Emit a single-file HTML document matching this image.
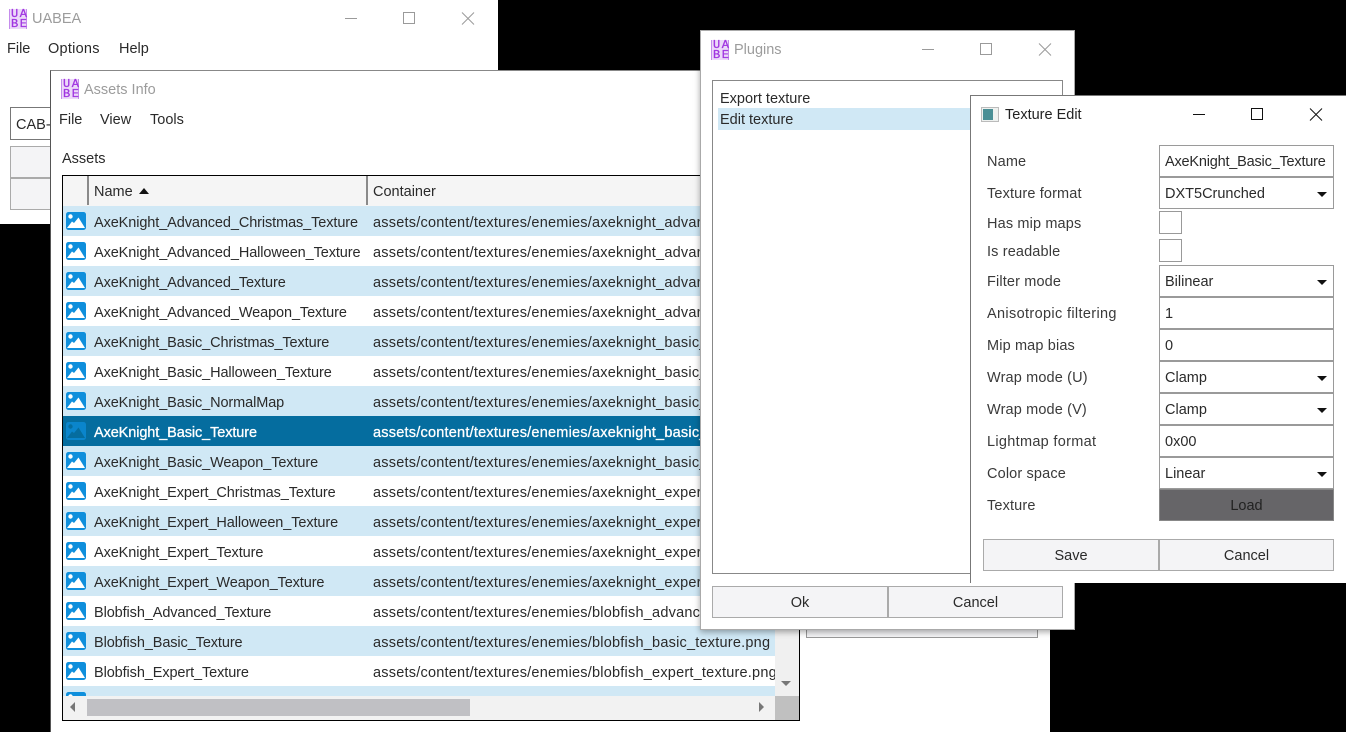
<!DOCTYPE html>
<html><head><meta charset="utf-8"><style>
html,body{margin:0;padding:0;width:1346px;height:732px;overflow:hidden;background:#000;font-family:"Liberation Sans",sans-serif;font-size:14.5px;color:#2a2a2a}
div,span{position:absolute;white-space:nowrap;box-sizing:border-box}
.win{background:#fff;overflow:hidden}
.t{line-height:20px;height:20px}
.logo{width:18px;height:20px;background:#ecd9f9;color:#a035e0;font:normal 12px/10px "Liberation Mono",monospace;text-align:center;letter-spacing:1.5px;padding-left:1px;border-left:1px solid #c58cec;border-right:1px solid #c58cec;-webkit-text-stroke:.3px #a035e0}
.title{color:#9c9c9c;font-size:14.5px;line-height:20px;height:20px}
.row{left:0;width:712px;height:30px}
.row span.n{left:31px;top:6px;line-height:22px;letter-spacing:-.1px}
.row span.c{left:310px;top:6px;line-height:22px;letter-spacing:.22px}
.a{background:#d0e8f5}
.sel{background:#056d9f;color:#fff}
.sel span{-webkit-text-stroke:.3px #fff}
.row svg{position:absolute;left:3px;top:6px}
.fld{left:188px;width:175px;height:32px;border:1px solid #9a9a9a;background:#fff;line-height:32px;padding-left:5px}
.btn{background:#f4f4f6;border:1px solid #aaa;text-align:center}
.arr{right:6px;top:14px;width:0;height:0;border-left:5px solid transparent;border-right:5px solid transparent;border-top:5px solid #111}
.lbl{left:16px;line-height:20px;height:20px;color:#3a3a3a;letter-spacing:.14px}
</style></head><body>
<svg width="0" height="0" style="position:absolute"><defs>
<symbol id="ic" viewBox="0 0 20 18"><rect width="20" height="18" rx="2.500" fill="#0f8fdc"/><circle cx="4.500" cy="4.500" r="2.200" fill="#fff"/><path d="M1 16 L6 9.500 L8 11 L12.500 5.500 L19 16Z" fill="#fff"/></symbol>
<symbol id="ics" viewBox="0 0 20 18"><rect width="20" height="18" rx="2.500" fill="#0a85cc"/><circle cx="4.500" cy="4.500" r="2.200" fill="#056d9f"/><path d="M1 16 L6 9.500 L8 11 L12.500 5.500 L19 16Z" fill="#056d9f"/></symbol>
</defs></svg>

<!-- UABEA -->
<div class="win" style="left:0;top:0;width:498px;height:224px">
 <div class="logo" style="left:9px;top:9px">UA<br>BE</div>
 <div class="title" style="left:32px;top:9px">UABEA</div>
 <svg style="position:absolute;left:340px;top:8px" width="140" height="20" fill="none" stroke="#9a9a9a"><path d="M5 10.500H17"/><rect x="63.500" y="4.500" width="11" height="11"/><path d="M122 4.500L134 16.500M134 4.500L122 16.500"/></svg>
 <div class="t" style="left:7px;top:39px">File</div>
 <div class="t" style="left:48px;top:39px;letter-spacing:.25px">Options</div>
 <div class="t" style="left:119px;top:39px">Help</div>
 <div style="left:10px;top:107px;width:60px;height:33px;border:1px solid #777;line-height:34px;padding-left:5px">CAB-</div>
 <div class="btn" style="left:10px;top:146px;width:60px;height:32px"></div>
 <div class="btn" style="left:10px;top:178px;width:60px;height:32px"></div>
</div>

<!-- Assets Info -->
<div class="win" style="left:50px;top:70px;width:1000px;height:662px;border-top:1px solid #888;border-left:1px solid #555">
 <div class="logo" style="left:10px;top:8px">UA<br>BE</div>
 <div class="title" style="left:33px;top:9px">Assets Info</div>
 <div class="t" style="left:8px;top:39px">File</div>
 <div class="t" style="left:49px;top:39px">View</div>
 <div class="t" style="left:99px;top:39px">Tools</div>
 <div class="t" style="left:11px;top:78px">Assets</div>
 <div style="left:11px;top:104px;width:738px;height:546px;border:1px solid #000;background:#f0f0f0;overflow:hidden">
  <div style="left:0;top:0;width:736px;height:30px;background:#f5f5f5"></div>
  <div style="left:24px;top:0;width:2px;height:29px;background:#8a8a8a"></div>
  <div style="left:303px;top:0;width:2px;height:29px;background:#8a8a8a"></div>
  <div class="t" style="left:31px;top:6px">Name</div>
  <div style="left:76px;top:12px;width:0;height:0;border-left:5px solid transparent;border-right:5px solid transparent;border-bottom:6px solid #111"></div>
  <div class="t" style="left:310px;top:6px">Container</div>
  <div style="left:0;top:30px;width:712px;height:490px;overflow:hidden;background:#fff">
   <div class="row a" style="top:0"><svg width="20" height="18"><use href="#ic"/></svg><span class="n">AxeKnight_Advanced_Christmas_Texture</span><span class="c">assets/content/textures/enemies/axeknight_advanced_christmas_texture.png</span></div>
   <div class="row" style="top:30px"><svg width="20" height="18"><use href="#ic"/></svg><span class="n">AxeKnight_Advanced_Halloween_Texture</span><span class="c">assets/content/textures/enemies/axeknight_advanced_halloween_texture.png</span></div>
   <div class="row a" style="top:60px"><svg width="20" height="18"><use href="#ic"/></svg><span class="n">AxeKnight_Advanced_Texture</span><span class="c">assets/content/textures/enemies/axeknight_advanced_texture.png</span></div>
   <div class="row" style="top:90px"><svg width="20" height="18"><use href="#ic"/></svg><span class="n">AxeKnight_Advanced_Weapon_Texture</span><span class="c">assets/content/textures/enemies/axeknight_advanced_weapon_texture.png</span></div>
   <div class="row a" style="top:120px"><svg width="20" height="18"><use href="#ic"/></svg><span class="n">AxeKnight_Basic_Christmas_Texture</span><span class="c">assets/content/textures/enemies/axeknight_basic_christmas_texture.png</span></div>
   <div class="row" style="top:150px"><svg width="20" height="18"><use href="#ic"/></svg><span class="n">AxeKnight_Basic_Halloween_Texture</span><span class="c">assets/content/textures/enemies/axeknight_basic_halloween_texture.png</span></div>
   <div class="row a" style="top:180px"><svg width="20" height="18"><use href="#ic"/></svg><span class="n">AxeKnight_Basic_NormalMap</span><span class="c">assets/content/textures/enemies/axeknight_basic_normalmap.png</span></div>
   <div class="row sel" style="top:210px"><svg width="20" height="18"><use href="#ics"/></svg><span class="n">AxeKnight_Basic_Texture</span><span class="c">assets/content/textures/enemies/axeknight_basic_texture.png</span></div>
   <div class="row a" style="top:240px"><svg width="20" height="18"><use href="#ic"/></svg><span class="n">AxeKnight_Basic_Weapon_Texture</span><span class="c">assets/content/textures/enemies/axeknight_basic_weapon_texture.png</span></div>
   <div class="row" style="top:270px"><svg width="20" height="18"><use href="#ic"/></svg><span class="n">AxeKnight_Expert_Christmas_Texture</span><span class="c">assets/content/textures/enemies/axeknight_expert_christmas_texture.png</span></div>
   <div class="row a" style="top:300px"><svg width="20" height="18"><use href="#ic"/></svg><span class="n">AxeKnight_Expert_Halloween_Texture</span><span class="c">assets/content/textures/enemies/axeknight_expert_halloween_texture.png</span></div>
   <div class="row" style="top:330px"><svg width="20" height="18"><use href="#ic"/></svg><span class="n">AxeKnight_Expert_Texture</span><span class="c">assets/content/textures/enemies/axeknight_expert_texture.png</span></div>
   <div class="row a" style="top:360px"><svg width="20" height="18"><use href="#ic"/></svg><span class="n">AxeKnight_Expert_Weapon_Texture</span><span class="c">assets/content/textures/enemies/axeknight_expert_weapon_texture.png</span></div>
   <div class="row" style="top:390px"><svg width="20" height="18"><use href="#ic"/></svg><span class="n">Blobfish_Advanced_Texture</span><span class="c">assets/content/textures/enemies/blobfish_advanced_texture.png</span></div>
   <div class="row a" style="top:420px"><svg width="20" height="18"><use href="#ic"/></svg><span class="n">Blobfish_Basic_Texture</span><span class="c">assets/content/textures/enemies/blobfish_basic_texture.png</span></div>
   <div class="row" style="top:450px"><svg width="20" height="18"><use href="#ic"/></svg><span class="n">Blobfish_Expert_Texture</span><span class="c">assets/content/textures/enemies/blobfish_expert_texture.png</span></div>
   <div class="row a" style="top:480px"><svg width="20" height="18"><use href="#ic"/></svg></div>
  </div>
  <div style="left:0;top:520px;width:712px;height:24px;background:#f2f2f2"></div>
  <div style="left:24px;top:523px;width:383px;height:17px;background:#c0c0c4"></div>
  <div style="left:7px;top:526px;width:0;height:0;border-top:5px solid transparent;border-bottom:5px solid transparent;border-right:5px solid #777"></div>
  <div style="left:696px;top:526px;width:0;height:0;border-top:5px solid transparent;border-bottom:5px solid transparent;border-left:5px solid #777"></div>
  <div style="left:712px;top:520px;width:24px;height:24px;background:#c0c0c0"></div>
  <div style="left:718px;top:505px;width:0;height:0;border-left:5px solid transparent;border-right:5px solid transparent;border-top:5px solid #777"></div>
 </div>
 <div class="btn" style="left:755px;top:520px;width:232px;height:47px;border-color:#999"></div>
</div>

<!-- Plugins -->
<div class="win" style="left:700px;top:30px;width:375px;height:600px;border:1px solid #aaa;box-shadow:0 2px 6px rgba(0,0,0,.35);overflow:visible">
 <div class="logo" style="left:10px;top:9px">UA<br>BE</div>
 <div class="title" style="left:33px;top:9px">Plugins</div>
 <svg style="position:absolute;left:215px;top:8px" width="140" height="20" fill="none" stroke="#9a9a9a"><path d="M6 10.500H18"/><rect x="64.500" y="4.500" width="11" height="11"/><path d="M123 4.500L135 16.500M135 4.500L123 16.500"/></svg>
 <div style="left:11px;top:49px;width:351px;height:494px;border:1px solid #888;background:#fff">
  <div class="t" style="left:7px;top:8px">Export texture</div>
  <div class="t" style="left:5px;top:27px;width:343px;height:22px;background:#d0e8f5;padding-left:2px;line-height:24px">Edit texture</div>
 </div>
 <div class="btn" style="left:11px;top:555px;width:176px;height:32px;line-height:32px">Ok</div>
 <div class="btn" style="left:187px;top:555px;width:175px;height:32px;line-height:32px">Cancel</div>
</div>

<!-- Texture Edit -->
<div class="win" style="left:970px;top:95px;width:376px;height:488px;border-left:1px solid #777;border-top:1px solid #777">
 <div style="left:10px;top:11px;width:18px;height:15px;background:#eef1ef;border:1px solid #bbb"></div>
 <div style="left:12px;top:13px;width:10px;height:11px;background:#4a8f95"></div>
 <div class="t" style="left:34px;top:9px;color:#222">Texture Edit</div>
 <svg style="position:absolute;left:215px;top:8px" width="140" height="20" fill="none" stroke="#111"><path d="M7 10.500H19"/><rect x="65.500" y="4.500" width="11" height="11"/><path d="M124 4.500L136 16.500M136 4.500L124 16.500"/></svg>
 <div class="lbl" style="top:56px">Name</div>
 <div class="lbl" style="top:88px">Texture format</div>
 <div class="lbl" style="top:118px">Has mip maps</div>
 <div class="lbl" style="top:146px">Is readable</div>
 <div class="lbl" style="top:176px">Filter mode</div>
 <div class="lbl" style="top:208px;letter-spacing:.35px">Anisotropic filtering</div>
 <div class="lbl" style="top:240px">Mip map bias</div>
 <div class="lbl" style="top:272px">Wrap mode (U)</div>
 <div class="lbl" style="top:304px">Wrap mode (V)</div>
 <div class="lbl" style="top:336px;letter-spacing:.3px">Lightmap format</div>
 <div class="lbl" style="top:368px">Color space</div>
 <div class="lbl" style="top:400px">Texture</div>
 <div class="fld" style="top:49px;letter-spacing:-.2px">AxeKnight_Basic_Texture</div>
 <div class="fld" style="top:81px">DXT5Crunched<span class="arr"></span></div>
 <div style="left:188px;top:115px;width:23px;height:23px;border:1px solid #999"></div>
 <div style="left:188px;top:143px;width:23px;height:23px;border:1px solid #999"></div>
 <div class="fld" style="top:169px">Bilinear<span class="arr"></span></div>
 <div class="fld" style="top:201px">1</div>
 <div class="fld" style="top:233px">0</div>
 <div class="fld" style="top:265px">Clamp<span class="arr"></span></div>
 <div class="fld" style="top:297px">Clamp<span class="arr"></span></div>
 <div class="fld" style="top:329px">0x00</div>
 <div class="fld" style="top:361px">Linear<span class="arr"></span></div>
 <div class="fld" style="top:393px;background:#666568;border-color:#888;text-align:center;padding:0;color:#222">Load</div>
 <div class="btn" style="left:12px;top:443px;width:176px;height:32px;line-height:32px">Save</div>
 <div class="btn" style="left:188px;top:443px;width:175px;height:32px;line-height:32px">Cancel</div>
</div>
</body></html>
